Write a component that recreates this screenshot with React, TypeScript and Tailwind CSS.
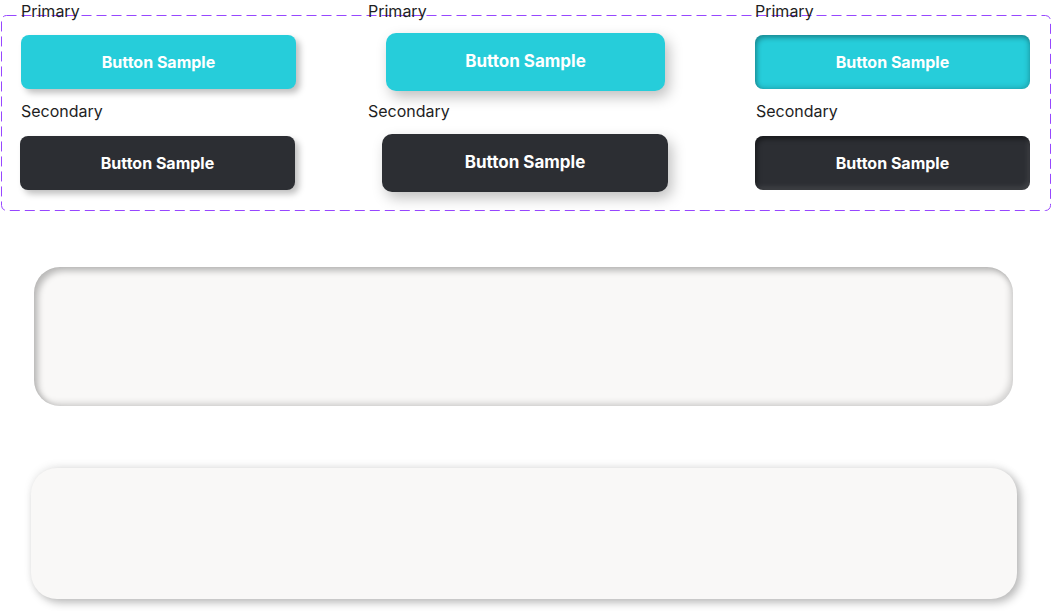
const font = { fontFamily: "Inter, 'Noto Sans', sans-serif" };

const Label = ({ children, className = "" }: { children: string; className?: string }) => (
  <p className={`text-[16px] leading-[19px] text-[#1e1e1e] ${className}`}>{children}</p>
);

const Button = ({ className }: { className: string }) => (
  <button className={`flex items-center justify-center font-bold text-white ${className}`}>
    Button Sample
  </button>
);

// Figma-style dashed component-set outline
const DashedOutline = () => (
  <svg className="absolute inset-0 pointer-events-none" width="1050" height="196">
    <rect
      x="0.5"
      y="0.5"
      width="1049"
      height="195"
      rx="5"
      fill="none"
      stroke="#9747ff"
      strokeWidth="1"
      strokeDasharray="10 5"
    />
  </svg>
);

export default function App() {
  return (
    <div style={font} className="w-[1052px] h-[611px] bg-white overflow-hidden">
      <div className="relative ml-[1px] mt-[15px] w-[1050px] h-[196px] flex">
        <DashedOutline />
        <div className="relative flex flex-col -mt-[13px] ml-[20px] w-[276px]">
          <Label>Primary</Label>
          <Button className="mt-[14px] w-[275px] h-[54px] rounded-[8px] bg-[#26cdda] text-[16px] shadow-[4px_4px_6px_rgba(0,0,0,0.25)]" />
          <Label className="mt-[13px]">Secondary</Label>
          <Button className="mt-[15px] -ml-[1px] w-[275px] h-[54px] rounded-[8px] bg-[#2c2e33] text-[16px] shadow-[4px_4px_6px_rgba(0,0,0,0.25)]" />
        </div>
        <div className="relative flex flex-col -mt-[13px] ml-[71px] w-[300px]">
          <Label>Primary</Label>
          <Button className="mt-[12px] ml-[18px] w-[279px] h-[58px] rounded-[10px] bg-[#26cdda] text-[17px] shadow-[4px_6px_14px_rgba(0,0,0,0.25)]" />
          <Label className="mt-[11px]">Secondary</Label>
          <Button className="mt-[13px] ml-[14px] w-[286px] h-[58px] rounded-[10px] bg-[#2c2e33] text-[17px] shadow-[4px_6px_14px_rgba(0,0,0,0.25)]" />
        </div>
        <div className="relative flex flex-col -mt-[13px] ml-[87px] w-[275px]">
          <Label>Primary</Label>
          <Button className="mt-[14px] w-[275px] h-[54px] rounded-[8px] bg-[#26cdda] text-[16px] shadow-[inset_2px_3px_5px_rgba(0,0,0,0.3),inset_-2px_-2px_5px_rgba(0,0,0,0.15)]" />
          <Label className="mt-[13px] ml-[1px]">Secondary</Label>
          <Button className="mt-[15px] w-[275px] h-[54px] rounded-[8px] bg-[#2c2e33] text-[16px] shadow-[inset_2px_3px_5px_rgba(0,0,0,0.45),inset_-2px_-3px_5px_rgba(255,255,255,0.1)]" />
        </div>
      </div>
      <div className="ml-[34px] mt-[56px] w-[979px] h-[139px] rounded-[26px] bg-[#f9f8f7] shadow-[inset_4px_4px_6px_rgba(0,0,0,0.25),inset_-3px_-3px_6px_rgba(0,0,0,0.15)]" />
      <div className="ml-[31px] mt-[62px] w-[986px] h-[131px] rounded-[26px] bg-[#f9f8f7] shadow-[4px_4px_8px_rgba(0,0,0,0.25),0_-2px_8px_rgba(0,0,0,0.08)]" />
    </div>
  );
}
